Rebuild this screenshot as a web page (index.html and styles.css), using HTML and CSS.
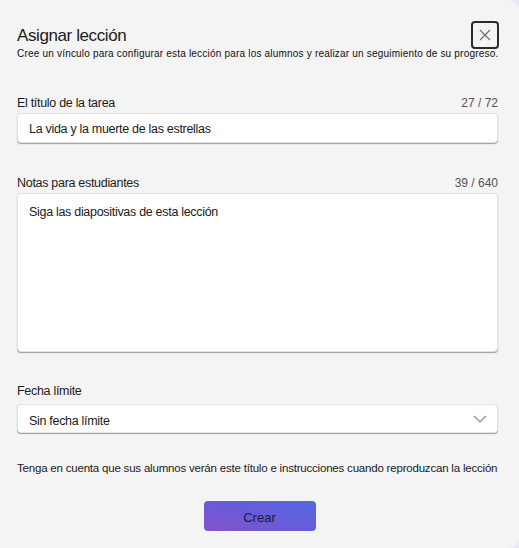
FILE: index.html
```html
<!DOCTYPE html>
<html lang="es">
<head>
    <meta charset="UTF-8">
    <meta name="viewport" content="width=device-width, initial-scale=1.0">
    <title>Asignar lección</title>
    <link rel="stylesheet" href="styles.css">
</head>
<body>
    <div class="dialog">
        <div class="header">
            <div class="heading">
                <h1>Asignar lección</h1>
                <p class="subtitle">Cree un vínculo para configurar esta lección para los alumnos y realizar un seguimiento de su progreso.</p>
            </div>
            <button class="close" aria-label="Cerrar">
                <svg width="12" height="12" viewBox="0 0 12 12"><path d="M1 1 L11 11 M11 1 L1 11" stroke="#6b6b6b" stroke-width="1.1" fill="none"/></svg>
            </button>
        </div>

        <div class="field field-title">
            <div class="label-row">
                <label>El título de la tarea</label>
                <span class="count">27 / 72</span>
            </div>
            <div class="box input">La vida y la muerte de las estrellas</div>
        </div>

        <div class="field field-notes">
            <div class="label-row">
                <label>Notas para estudiantes</label>
                <span class="count">39 / 640</span>
            </div>
            <div class="box textarea">Siga las diapositivas de esta lección</div>
        </div>

        <div class="field field-date">
            <div class="label-row">
                <label>Fecha límite</label>
            </div>
            <div class="box select">
                <span>Sin fecha límite</span>
                <svg width="14" height="8" viewBox="0 0 14 8"><path d="M1 1 L7 7 L13 1" stroke="#8a8a8a" stroke-width="1.1" fill="none"/></svg>
            </div>
        </div>

        <p class="note">Tenga en cuenta que sus alumnos verán este título e instrucciones cuando reproduzcan la lección</p>

        <div class="actions">
            <button class="primary">Crear</button>
        </div>
    </div>
</body>
</html>
```

FILE: styles.css
```css
body {
    margin: 0;
    background: #ebe8f6;
    font-family: "Liberation Sans", Arial, sans-serif;
    color: #1b1b1b;
}
.dialog {
    width: 519px;
    height: 548px;
    box-sizing: border-box;
    background: #f4f4f4;
    border-radius: 0 10px 10px 0;
    padding: 21px 21px 0 17px;
}
.header {
    display: flex;
    justify-content: space-between;
    align-items: flex-start;
}
.heading {
    flex: 1;
    min-width: 0;
    white-space: nowrap;
}
h1 {
    font-size: 17px;
    font-weight: normal;
    line-height: 22px;
    margin: 4px 0 0 0;
    letter-spacing: -0.4px;
}
.subtitle {
    font-size: 10px;
    line-height: 14px;
    margin: 0;
    color: #111;
    letter-spacing: 0.2px;
}
.close {
    width: 28px;
    height: 28px;
    margin-right: -1px;
    flex-shrink: 0;
    border: 2px solid #2b2b2b;
    border-radius: 4px;
    background: #f4f4f4;
    display: flex;
    align-items: center;
    justify-content: center;
    padding: 0;
}
.label-row {
    display: flex;
    justify-content: space-between;
    font-size: 12.5px;
    letter-spacing: -0.3px;
    line-height: 16px;
    margin-bottom: 2px;
}
.count {
    color: #555;
    font-size: 12px;
    letter-spacing: 0;
}
.field-title {
    margin-top: 34px;
}
.field-notes {
    margin-top: 32px;
}
.field-date {
    margin-top: 31px;
}
.field-date .label-row {
    margin-bottom: 5px;
}
.box {
    background: #fff;
    border: 1px solid #e3e3e3;
    border-radius: 4px;
    box-shadow: 0 1px 1px rgba(0,0,0,0.35);
    box-sizing: border-box;
    font-size: 12.5px;
    letter-spacing: -0.3px;
    padding: 0 11px;
}
.input {
    height: 30px;
    line-height: 30px;
}
.textarea {
    height: 159px;
    padding-top: 10px;
    line-height: 16px;
}
.select {
    height: 29px;
    display: flex;
    align-items: center;
    justify-content: space-between;
    padding-right: 10px;
}
.select span {
    padding-top: 4px;
}
.note {
    font-size: 11.5px;
    letter-spacing: -0.2px;
    line-height: 16px;
    margin: 27px 0 0 0;
    white-space: nowrap;
}
.actions {
    display: flex;
    justify-content: center;
    margin-top: 25px;
    padding-left: 4px;
}
.primary {
    width: 112px;
    height: 30px;
    border: none;
    border-radius: 4px;
    background: linear-gradient(20deg, #8752c9 0%, #6a5ad8 45%, #5569e2 100%);
    color: #1a1a3a;
    font-family: "Liberation Sans", Arial, sans-serif;
    font-size: 13px;
    padding-top: 4px;
}
```
